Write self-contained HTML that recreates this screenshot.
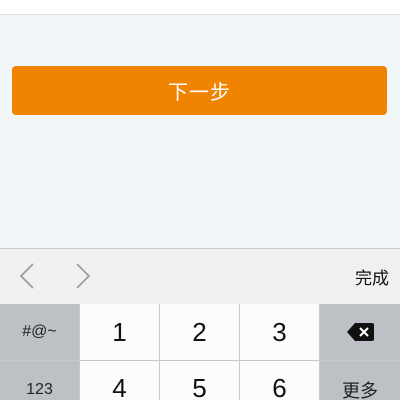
<!DOCTYPE html><html><head><style>
html,body{margin:0;width:400px;height:400px;overflow:hidden}
body{background:#f2f5f7;font-family:"Liberation Sans","Noto Sans CJK SC",sans-serif;position:relative}
div{position:absolute;box-sizing:border-box}
.k{display:flex;align-items:center;justify-content:center;background:#fcfcfc;font-size:26px;color:#111}
.g{background:#bdc0c5;font-size:16px;color:#222}
</style></head><body>
<div style="left:0;top:0;width:400px;height:15px;background:#fff;border-bottom:1px solid #dcdcdc"></div>
<div style="left:12px;top:66px;width:375px;height:49px;background:#f08300;border-radius:4px;color:#fff;font-size:20px;display:flex;align-items:center;justify-content:center;letter-spacing:1px">下一步</div>
<div style="left:0;top:248px;width:400px;height:56px;background:#f0f0f2;border-top:1px solid #ccc"></div>
<svg style="position:absolute;left:0;top:249px" width="120" height="54"><path d="M33 15 L21 27 L33 39" fill="none" stroke="#999" stroke-width="1.6"/><path d="M77 15 L89 27 L77 39" fill="none" stroke="#999" stroke-width="1.6"/></svg>
<div style="right:11px;top:264px;font-size:17px;color:#111">完成</div>
<div style="left:0;top:304px;width:400px;height:96px;background:#c8c8cc"></div>
<div class="k g" style="left:0;top:304px;width:79px;height:56px">#@~</div>
<div class="k" style="left:80px;top:304px;width:79px;height:56px">1</div>
<div class="k" style="left:160px;top:304px;width:79px;height:56px">2</div>
<div class="k" style="left:240px;top:304px;width:79px;height:56px">3</div>
<div class="k g" style="left:320px;top:304px;width:80px;height:56px"><svg width="30" height="22"><path d="M2 11 L10 2 H27 Q29 2 29 4 V18 Q29 20 27 20 H10 Z" fill="#111"/><path d="M15 7 L23 15 M23 7 L15 15" stroke="#fff" stroke-width="2"/></svg></div>
<div class="k g" style="left:0;top:361px;width:79px;height:39px;padding-top:18px">123</div>
<div class="k" style="left:80px;top:361px;width:79px;height:39px;padding-top:16px">4</div>
<div class="k" style="left:160px;top:361px;width:79px;height:39px;padding-top:16px">5</div>
<div class="k" style="left:240px;top:361px;width:79px;height:39px;padding-top:16px">6</div>
<div class="k g" style="left:320px;top:361px;width:80px;height:39px;padding-top:18px;font-size:18px">更多</div>
</body></html>
